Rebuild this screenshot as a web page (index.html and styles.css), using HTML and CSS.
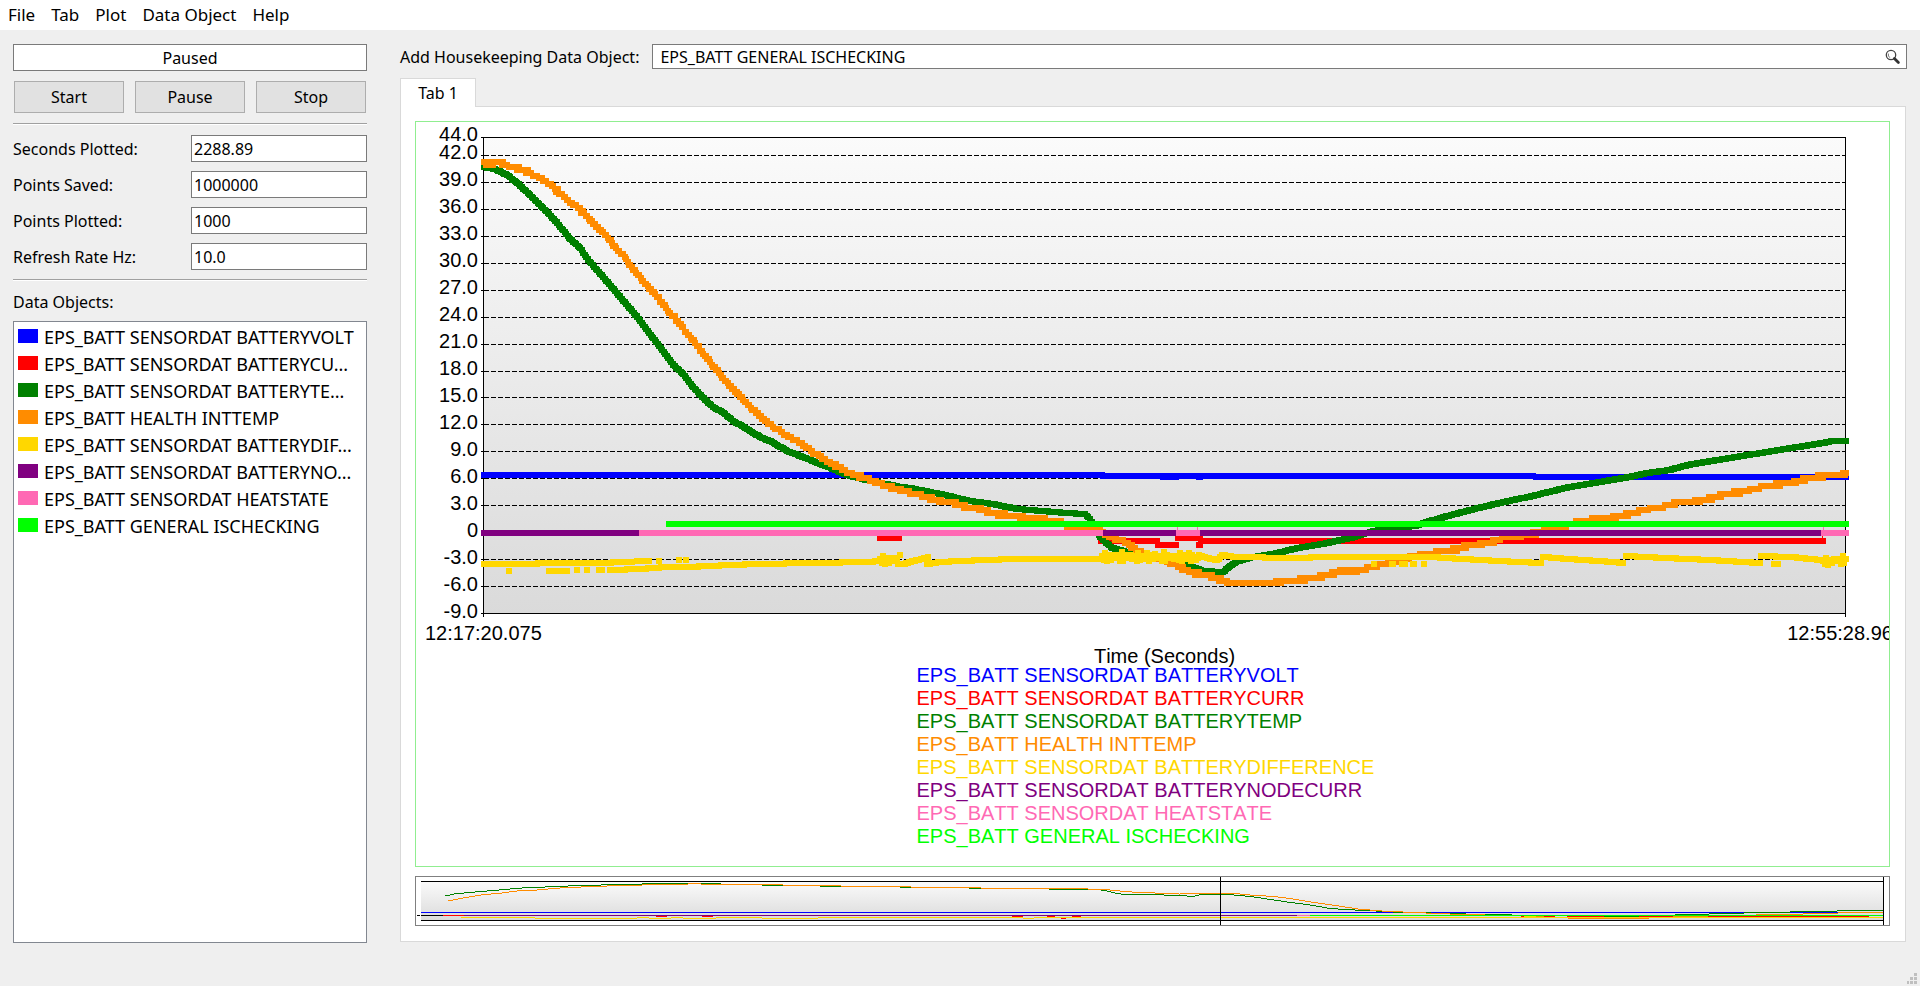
FILE: index.html
```html
<!DOCTYPE html>
<html lang="en">
<head>
<meta charset="utf-8">
<title>Data Plotter</title>
<link rel="stylesheet" href="styles.css">
</head>
<body>
<nav class="menubar">
  <button class="menu" type="button">File</button>
  <button class="menu" type="button">Tab</button>
  <button class="menu" type="button">Plot</button>
  <button class="menu" type="button">Data Object</button>
  <button class="menu" type="button">Help</button>
</nav>

<main class="workspace">
  <aside class="sidebar">
    <input class="field status" type="text" value="Paused" readonly aria-label="Plot status">
    <div class="controls">
      <button class="control" type="button">Start</button>
      <button class="control" type="button">Pause</button>
      <button class="control" type="button">Stop</button>
    </div>
    <hr class="rule">
    <div class="settings">
      <label for="seconds">Seconds Plotted:</label>
      <input class="field" id="seconds" type="text" value="2288.89">
      <label for="saved">Points Saved:</label>
      <input class="field" id="saved" type="text" value="1000000">
      <label for="plotted">Points Plotted:</label>
      <input class="field" id="plotted" type="text" value="1000">
      <label for="rate">Refresh Rate Hz:</label>
      <input class="field" id="rate" type="text" value="10.0">
    </div>
    <hr class="rule">
    <h2 class="list-title" id="objects-title">Data Objects:</h2>
    <ul class="objects" aria-labelledby="objects-title">
      <li class="object"><span class="swatch bg-blue"></span><span class="name">EPS_BATT SENSORDAT BATTERYVOLT</span></li>
      <li class="object"><span class="swatch bg-red"></span><span class="name">EPS_BATT SENSORDAT BATTERYCU...</span></li>
      <li class="object"><span class="swatch bg-green"></span><span class="name">EPS_BATT SENSORDAT BATTERYTE...</span></li>
      <li class="object"><span class="swatch bg-orange"></span><span class="name">EPS_BATT HEALTH INTTEMP</span></li>
      <li class="object"><span class="swatch bg-gold"></span><span class="name">EPS_BATT SENSORDAT BATTERYDIF...</span></li>
      <li class="object"><span class="swatch bg-purple"></span><span class="name">EPS_BATT SENSORDAT BATTERYNO...</span></li>
      <li class="object"><span class="swatch bg-pink"></span><span class="name">EPS_BATT SENSORDAT HEATSTATE</span></li>
      <li class="object"><span class="swatch bg-lime"></span><span class="name">EPS_BATT GENERAL ISCHECKING</span></li>
    </ul>
  </aside>

  <section class="content">
    <div class="search">
      <label for="add-object">Add Housekeeping Data Object:</label>
      <div class="search-box">
        <input class="search-input" id="add-object" type="text" value="EPS_BATT GENERAL ISCHECKING">
        <button class="search-button" type="button" aria-label="Search">
          <svg width="16" height="16" viewBox="0 0 16 16">
            <circle cx="6" cy="6" r="4.7" fill="#fff" stroke="#444" stroke-width="1.3"/>
            <path d="M3.4 4.6v2.6l1.8 1.4" fill="none" stroke="#777" stroke-width="1"/>
            <path d="M9.4 9.4l4 4" stroke="#333" stroke-width="2.8" stroke-linecap="round"/>
          </svg>
        </button>
      </div>
    </div>

    <div class="tabs" role="tablist">
      <button class="tab" type="button" role="tab" aria-selected="true">Tab 1</button>
    </div>

    <div class="pane" role="tabpanel">
      <figure class="chart">
        <div class="plot-row">
          <div class="y-axis">
            <span>44.0</span><span>42.0</span><span>39.0</span><span>36.0</span><span>33.0</span><span>30.0</span><span>27.0</span><span>24.0</span><span>21.0</span><span>18.0</span><span>15.0</span><span>12.0</span><span>9.0</span><span>6.0</span><span>3.0</span><span>0</span><span>-3.0</span><span>-6.0</span><span>-9.0</span>
          </div>
          <svg class="plot" id="plot" viewBox="483 137 1363 477" preserveAspectRatio="none" shape-rendering="crispEdges"></svg>
        </div>
        <div class="x-axis"><span>12:17:20.075</span><span>12:55:28.965</span></div>
        <figcaption class="x-title">Time (Seconds)</figcaption>
        <ul class="legend">
          <li class="blue">EPS_BATT SENSORDAT BATTERYVOLT</li>
          <li class="red">EPS_BATT SENSORDAT BATTERYCURR</li>
          <li class="green">EPS_BATT SENSORDAT BATTERYTEMP</li>
          <li class="orange">EPS_BATT HEALTH INTTEMP</li>
          <li class="gold">EPS_BATT SENSORDAT BATTERYDIFFERENCE</li>
          <li class="purple">EPS_BATT SENSORDAT BATTERYNODECURR</li>
          <li class="pink">EPS_BATT SENSORDAT HEATSTATE</li>
          <li class="lime">EPS_BATT GENERAL ISCHECKING</li>
        </ul>
      </figure>
      <div class="overview">
        <svg class="overview-plot" id="overview" viewBox="416 877 1473 48" preserveAspectRatio="none" shape-rendering="crispEdges"></svg>
      </div>
    </div>
  </section>
</main>

<footer class="statusbar">
  <svg class="grip" width="10" height="11" viewBox="0 0 10 11" fill="#bfbfbf" shape-rendering="crispEdges">
    <path d="M7 0h3v3h-3zM3 4h3v3h-3zM7 4h3v3h-3zM0 8h2v3h-2zM3 8h3v3h-3zM7 8h3v3h-3z"/>
  </svg>
</footer>
<script src="plot.js"></script>
</body>
</html>
```

FILE: styles.css
```css
* { box-sizing: border-box; }

body {
  margin: 0;
  height: 100vh;
  min-height: 800px;
  display: flex;
  flex-direction: column;
  background: #efefef;
  color: #000;
  font-family: "Noto Sans", "Open Sans", sans-serif;
  font-size: 16px;
}

button, input { font: inherit; color: inherit; }
ul { list-style: none; margin: 0; padding: 0; }

.menubar {
  flex: none;
  display: flex;
  height: 30px;
  background: #fff;
}
.menu {
  border: 0;
  background: none;
  padding: 0 8px;
  font-size: 17px;
  line-height: 30px;
}

.workspace {
  flex: 1;
  min-height: 0;
  display: grid;
  grid-template-columns: 354px minmax(0, 1fr);
  grid-template-rows: minmax(0, 1fr);
  column-gap: 33px;
  padding: 14px 13px 0;
}

.sidebar { display: flex; flex-direction: column; }
.field {
  flex: none;
  width: 100%;
  height: 27px;
  padding: 0 2px;
  border: 1px solid #7a7a7a;
  background: #fff;
}
.status { text-align: center; }
.controls {
  display: grid;
  grid-template-columns: repeat(3, 1fr);
  gap: 11px;
  margin: 10px 1px;
}
.control {
  height: 32px;
  padding: 0;
  border: 1px solid #adadad;
  background: #e1e1e1;
}
.rule {
  width: 100%;
  height: 2px;
  margin: 0;
  border: 0;
  border-top: 1px solid #a0a0a0;
  border-bottom: 1px solid #fff;
}
.settings {
  display: grid;
  grid-template-columns: 178px 1fr;
  row-gap: 9px;
  align-items: center;
  margin: 10px 0 9px;
}
.list-title {
  margin: 10px 0 8px;
  font-size: 16px;
  font-weight: 400;
  line-height: 22px;
}
.objects {
  flex: 1;
  padding: 2px 4px;
  border: 1px solid #828790;
  background: #fff;
}
.object {
  display: flex;
  align-items: center;
  gap: 6px;
  height: 27px;
  font-size: 18px;
  line-height: 27px;
  white-space: nowrap;
}
.swatch { flex: none; width: 20px; height: 14px; margin-bottom: 4px; }

.content { display: flex; flex-direction: column; min-height: 0; }
.search { flex: none; display: flex; align-items: center; gap: 13px; }
.search-box {
  flex: 1;
  display: flex;
  align-items: center;
  height: 25px;
  padding: 0 5px 0 7px;
  border: 1px solid #7a7a7a;
  background: #fff;
}
.search-input { flex: 1; min-width: 0; height: 23px; padding: 0; border: 0; background: none; outline: 0; }
.search-button { display: flex; padding: 0; border: 0; background: none; }

.tabs { flex: none; display: flex; margin-top: 9px; }
.tab {
  position: relative;
  width: 76px;
  height: 29px;
  margin-bottom: -1px;
  padding: 0;
  border: 1px solid #d9d9d9;
  border-bottom: 0;
  background: #fff;
}
.pane {
  flex: 1;
  min-height: 0;
  display: flex;
  flex-direction: column;
  gap: 9px;
  margin: 0 1px 1px 0;
  padding: 14px 15px 15px 14px;
  border: 1px solid #d9d9d9;
  background: #fff;
}
.chart {
  flex: 1;
  min-height: 0;
  display: flex;
  flex-direction: column;
  margin: 0;
  padding: 15px 0 18px;
  border: 1px solid #90ee90;
  overflow: hidden;
  font-family: "Liberation Sans", Arial, sans-serif;
  font-size: 20px;
  font-kerning: none;
}
.plot-row { flex: 1; display: flex; min-height: 0; padding-right: 43px; }
.y-axis {
  display: grid;
  grid-template-rows: 2fr repeat(17, 3fr) 0;
  width: 67px;
  margin-top: -12px;
  margin-bottom: 12px;
  padding-right: 5px;
  text-align: right;
}
.y-axis span { height: 0; line-height: 18px; }
.plot {
  flex: 1;
  min-width: 0;
  contain: size;
  overflow: visible;
  background: linear-gradient(#fbfbfb, #dadada);
}
.x-axis {
  display: flex;
  justify-content: space-between;
  margin: 8px -15px 0 9px;
  line-height: 23px;
}
.x-title { padding: 0 43px 0 67px; line-height: 22px; text-align: center; }
.legend { min-width: 472px; margin: -3px auto 0; line-height: 23px; }

.overview {
  flex: none;
  height: 50px;
  border: 1px solid #808080;
}
.overview-plot { display: block; width: 100%; height: 100%; }

.statusbar { flex: none; display: flex; justify-content: flex-end; align-items: flex-end; height: 43px; padding: 0 3px 2px; }
.grip { display: block; }

.blue { color: #0000ff; }
.red { color: #ff0000; }
.green { color: #008000; }
.orange { color: #ff8c00; }
.gold { color: #ffd700; }
.purple { color: #800080; }
.pink { color: #ff69b4; }
.lime { color: #00ff00; }
.bg-blue { background: #0000ff; }
.bg-red { background: #ff0000; }
.bg-green { background: #008000; }
.bg-orange { background: #ff8c00; }
.bg-gold { background: #ffd700; }
.bg-purple { background: #800080; }
.bg-pink { background: #ff69b4; }
.bg-lime { background: #00ff00; }
```

FILE: plot.js
```js
const COLORS = {
  blue: '#0000ff', red: '#ff0000', green: '#008000', orange: '#ff8c00',
  gold: '#ffd700', purple: '#800080', pink: '#ff69b4', lime: '#00ff00', black: '#000000'
};
const NS = 'http://www.w3.org/2000/svg';

function add(svg, tag, attrs) {
  const el = document.createElementNS(NS, tag);
  for (const key in attrs) el.setAttribute(key, attrs[key]);
  svg.appendChild(el);
}

/* Filled bar covering x1..x2, given its top edge. */
function bar(svg, color, x1, x2, y, h) {
  add(svg, 'rect', { x: x1, y: y, width: x2 - x1, height: h, fill: COLORS[color] });
}

/* Runs through the key points and stamps a 6px marker at each sample. */
function markers(svg, color, keys, quantum, noise) {
  let d = '';
  let n = 0;
  for (let i = 0; i + 3 < keys.length; i += 2) {
    const [x1, y1, x2, y2] = keys.slice(i, i + 4);
    for (let x = x1; x <= x2; x += 1.5) {
      n += 1;
      let y = y1 + (y2 - y1) * (x - x1) / (x2 - x1);
      if (noise) y += Math.sin(n * 12.9) * Math.sin(n * 3.7) * noise;
      const top = Math.round(y / quantum) * quantum - 3;
      d += `M${Math.round(x) - 3} ${Math.round(top)}h6v6h-6z`;
    }
  }
  add(svg, 'path', { d: d, fill: COLORS[color] });
}

/* Main plot */
const plot = document.getElementById('plot');
for (let v = 42; v >= -6; v -= 3) {
  const y = Math.round(137 + (44 - v) * 476 / 53);
  bar(plot, 'black', 481, 484, y, 1);
  add(plot, 'path', { d: `M484 ${y + 0.5}H1845`, stroke: '#000', 'stroke-dasharray': '5 2' });
}
bar(plot, 'black', 481, 1846, 137, 1);
bar(plot, 'black', 481, 1846, 613, 1);
bar(plot, 'black', 483, 484, 137, 480);
bar(plot, 'black', 1845, 1846, 137, 480);

bar(plot, 'blue', 481, 1105, 472, 6);
bar(plot, 'blue', 1100, 1536, 473, 6);
bar(plot, 'blue', 1160, 1179, 474, 6);
bar(plot, 'blue', 1196, 1203, 474, 6);
bar(plot, 'blue', 1533, 1849, 474, 6);

bar(plot, 'red', 877, 902, 535, 6);
bar(plot, 'red', 1098, 1160, 538, 6);
bar(plot, 'red', 1155, 1179, 542, 6);
bar(plot, 'red', 1175, 1203, 535, 6);
bar(plot, 'red', 1196, 1203, 542, 6);
bar(plot, 'red', 1198, 1826, 538, 6);
bar(plot, 'red', 1822, 1823, 533, 6);

markers(plot, 'green', [
  484, 167, 495, 169, 507, 175, 517, 183, 530, 195, 543, 208, 557, 223, 570, 239, 580, 248, 588, 260,
  603, 277, 620, 297, 637, 317, 653, 338, 673, 365, 683, 374, 693, 387, 705, 400, 713, 407, 722, 412,
  733, 421, 747, 429, 760, 437, 772, 442, 787, 451, 803, 457, 820, 464, 833, 469, 847, 475, 867, 480,
  900, 487, 910, 488, 940, 494, 970, 501, 993, 504, 1017, 509, 1043, 511, 1067, 513, 1085, 514,
  1090, 519, 1093, 525, 1100, 537, 1112, 548, 1127, 552, 1150, 555, 1170, 560, 1190, 566, 1203, 571,
  1223, 572, 1230, 566, 1238, 561, 1253, 557, 1277, 553, 1297, 548, 1327, 543, 1350, 538, 1373, 531,
  1414, 526, 1440, 518, 1466, 511, 1495, 504, 1532, 496, 1569, 487, 1606, 481, 1629, 477, 1647, 473,
  1669, 470, 1688, 465, 1717, 460, 1754, 454, 1784, 449, 1817, 444, 1832, 441, 1846, 441], 1, 0);

markers(plot, 'orange', [
  484, 163, 503, 163, 507, 166, 517, 169, 528, 172, 540, 178, 553, 187, 562, 195, 570, 202, 578, 208,
  590, 220, 603, 232, 613, 245, 623, 255, 630, 266, 643, 281, 657, 297, 670, 313, 683, 328, 697, 346,
  707, 358, 723, 378, 737, 393, 753, 410, 773, 427, 788, 437, 797, 441, 813, 453, 833, 464, 850, 473,
  867, 478, 883, 485, 907, 492, 927, 497, 950, 503, 973, 508, 993, 513, 1020, 517, 1040, 519, 1053, 521,
  1073, 527, 1100, 531, 1110, 538, 1123, 541, 1133, 548, 1147, 555, 1167, 561, 1180, 567, 1197, 574,
  1213, 577, 1227, 582, 1243, 584, 1267, 583, 1297, 580, 1320, 577, 1340, 571, 1355, 571, 1377, 566,
  1392, 562, 1414, 556, 1436, 552, 1458, 549, 1468, 546, 1488, 543, 1503, 538, 1536, 533, 1558, 527,
  1580, 522, 1614, 517, 1636, 512, 1654, 508, 1680, 503, 1703, 500, 1725, 494, 1747, 491, 1765, 486,
  1788, 483, 1806, 479, 1825, 476, 1846, 474], 2.7, 1.1);

markers(plot, 'gold', [484, 564, 590, 563, 632, 562], 1, 0);
markers(plot, 'gold', [637, 561, 650, 561], 1, 0);
markers(plot, 'gold', [549, 571, 568, 571], 1, 0);
for (const [x, y] of [[509, 571], [577, 570], [587, 570], [599, 570], [602, 570], [659, 561], [679, 560], [686, 560]]) {
  bar(plot, 'gold', x - 3, x + 3, y - 3, 6);
}
markers(plot, 'gold', [610, 570, 640, 569, 653, 568, 667, 567, 687, 567, 710, 566, 730, 565, 757, 564, 813, 563, 867, 562, 880, 561], 1, 0);
markers(plot, 'gold', [880, 560, 902, 560], 1, 5);
markers(plot, 'gold', [903, 564, 913, 561, 929, 557], 1, 0);
markers(plot, 'gold', [927, 564, 940, 562, 960, 561, 1013, 559, 1102, 559], 1, 0);
markers(plot, 'gold', [1102, 557, 1196, 557], 1, 5);
markers(plot, 'gold', [1196, 560, 1199, 555, 1207, 558, 1217, 560, 1222, 555, 1236, 557, 1293, 558, 1327, 557,
  1360, 557, 1432, 557, 1462, 559, 1499, 561, 1541, 563], 1, 0);
markers(plot, 'gold', [1543, 557, 1569, 559, 1599, 561, 1624, 563], 1, 0);
markers(plot, 'gold', [1626, 556, 1665, 558, 1710, 560, 1760, 563], 1, 0);
markers(plot, 'gold', [1761, 556, 1791, 557, 1821, 560], 1, 0);
markers(plot, 'gold', [1823, 562, 1846, 560], 1, 4);
for (const [x1, x2] of [[1371, 1377], [1389, 1396], [1399, 1408], [1410, 1417], [1421, 1427], [1771, 1781]]) {
  bar(plot, 'gold', x1, x2, 561, 6);
}

bar(plot, 'purple', 481, 1849, 530, 6);
bar(plot, 'pink', 639, 1103, 530, 6);
bar(plot, 'pink', 1176, 1200, 530, 6);
bar(plot, 'pink', 1821, 1849, 530, 6);
bar(plot, 'pink', 1177, 1178, 525, 6);
bar(plot, 'pink', 1197, 1198, 525, 6);
bar(plot, 'pink', 1823, 1824, 525, 6);
bar(plot, 'lime', 666, 1849, 521, 6);

/* Overview strip */
const overview = document.getElementById('overview');
const defs = document.createElementNS(NS, 'defs');
defs.innerHTML = '<linearGradient id="fade" x1="0" y1="0" x2="0" y2="1"><stop offset="0" stop-color="#fbfbfb"/><stop offset="1" stop-color="#dadada"/></linearGradient>';
overview.appendChild(defs);
add(overview, 'rect', { x: 421, y: 881, width: 1462, height: 40, fill: 'url(#fade)' });
bar(overview, 'black', 421, 1883, 881, 1);
bar(overview, 'black', 421, 1883, 920, 1);
bar(overview, 'blue', 421, 1883, 912, 1);

function trace(color, keys) {
  let d = '';
  for (let i = 0; i + 3 < keys.length; i += 2) {
    const [x1, y1, x2, y2] = keys.slice(i, i + 4);
    for (let x = x1; x < x2; x++) {
      const y = Math.floor(y1 + (y2 - y1) * (x - x1) / (x2 - x1));
      d += `M${x} ${y}h1v1h-1z`;
    }
  }
  add(overview, 'path', { d: d, fill: COLORS[color] });
}
function runs(color, list) {
  for (const [x1, x2, y] of list) bar(overview, color, x1, x2, y, 1);
}

trace('green', [445, 895.9, 454, 893.9, 474, 892, 498, 890, 521, 888, 544, 887, 567, 886, 601, 885, 601, 884, 641, 884,
  647, 883, 716, 883.9, 762, 885, 819, 885.9, 820, 886, 899, 886.9, 900, 887, 968, 887.9, 969, 888, 1048, 888.9,
  1049, 889, 1100, 889.9, 1107, 891, 1115, 893, 1121, 894, 1163, 894, 1164, 895, 1186, 895.5, 1187, 896, 1194, 896,
  1202, 894, 1220, 894, 1234, 895, 1250, 896.5, 1267, 899, 1287, 902, 1307, 904.5, 1327, 908, 1343, 909.5, 1367, 910.5,
  1396, 912.2, 1431, 912.5]);
runs('green', [[1450, 1466, 913], [1485, 1512, 914], [1535, 1536, 917], [1675, 1709, 914], [1709, 1744, 913],
  [1744, 1790, 912], [1790, 1837, 911], [1837, 1883, 910]]);
trace('orange', [448, 900.9, 463, 897.9, 480, 895, 501, 893, 516, 891, 536, 890, 559, 888, 583, 886.9, 606, 886, 641, 885,
  642, 884.5, 687, 884.4, 688, 883.5, 700, 883.5, 701, 884, 782, 884.9, 783, 885, 840, 885.9, 841, 886, 910, 886.9,
  911, 887, 980, 887.9, 981, 888, 1085, 888.9, 1109, 889.9, 1120, 891, 1132, 892, 1155, 893, 1179, 894, 1201, 893.9,
  1202, 893, 1238, 893.9, 1250, 895, 1273, 896.5, 1290, 898.5, 1311, 902, 1335, 905.5, 1358, 909, 1379, 910.9,
  1402, 911.9, 1403, 912, 1426, 912]);
runs('orange', [[1426, 1450, 913], [1450, 1485, 914]]);
runs('gold', [[461, 535, 917], [535, 637, 918], [637, 649, 917], [649, 671, 918], [671, 683, 917], [683, 716, 918],
  [716, 762, 917], [762, 818, 918], [818, 1023, 917], [1023, 1034, 918], [1034, 1883, 917], [1524, 1536, 916]]);
runs('red', [[656, 667, 916], [702, 713, 916], [1012, 1023, 916], [1047, 1055, 916], [1061, 1066, 918],
  [1072, 1081, 916], [1521, 1524, 916], [1544, 1555, 916], [1567, 1869, 916]]);
runs('orange', [[1536, 1544, 916], [1568, 1649, 918], [1673, 1708, 916], [1756, 1803, 914], [1803, 1838, 913], [1838, 1883, 912]]);
runs('green', [[1604, 1639, 916]]);
runs('black', [[417, 420, 915], [421, 443, 915]]);
runs('red', [[443, 464, 915]]);
runs('purple', [[464, 1297, 915]]);
runs('pink', [[1297, 1310, 915]]);
runs('lime', [[1310, 1883, 915]]);
bar(overview, 'black', 1220, 1221, 877, 48);
bar(overview, 'black', 1883, 1884, 877, 48);
```
